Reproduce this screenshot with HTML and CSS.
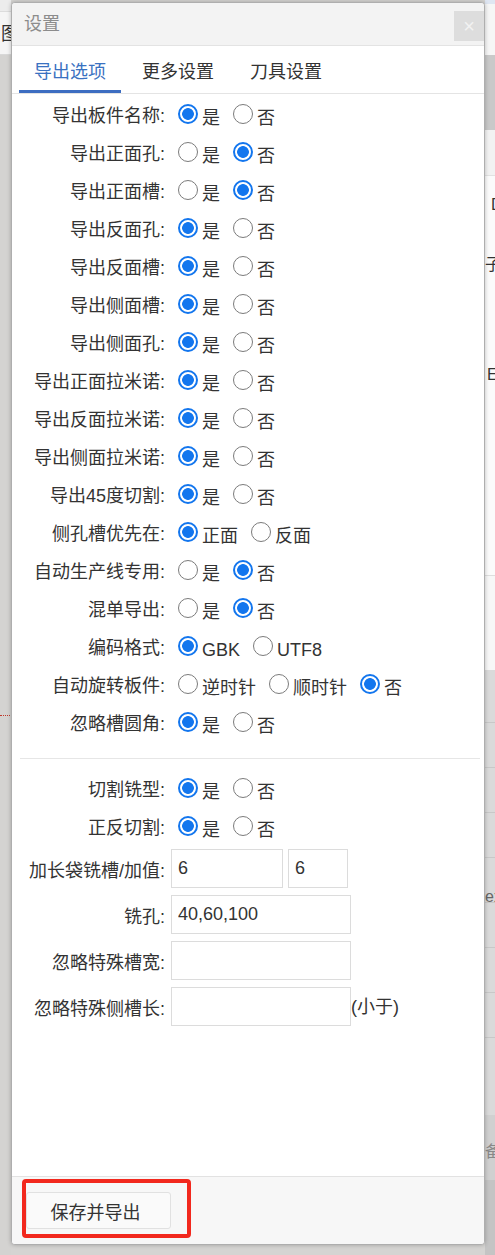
FILE: index.html
```html
<!DOCTYPE html>
<html lang="zh">
<head>
<meta charset="utf-8">
<title>设置</title>
<link rel="stylesheet" href="styles.css">
</head>
<body>
<div class="bg">
  <div class="bg-left">
    <div class="bl-top"></div>
    <div class="bl-bar"><span>图</span></div>
    <div class="bl-gray"><div class="dots"></div></div>
  </div>
  <div class="bg-mid"></div>
  <div class="bg-right">
    <div class="br b1"></div>
    <div class="br b2"></div>
    <div class="br b3"></div>
    <div class="br b4"></div>
    <div class="br b5"><span class="frag d">D</span><span class="frag z">子</span><span class="frag e">E</span></div>
    <div class="br b6"></div>
    <div class="br b7"><div class="ln"></div><div class="ln"></div><div class="ln"></div><div class="ln"></div><div class="ln"></div><div class="ln"></div><div class="ln"></div><div class="ln"></div><span class="frag x">ex</span></div>
    <div class="br b8"><span class="frag b">备</span></div>
    <div class="br b9"></div>
  </div>
</div>

<div class="dialog">
  <div class="dlg-head">
    <span class="dlg-title">设置</span>
    <span class="dlg-close">×</span>
  </div>
  <div class="tabs">
    <div class="tab active">导出选项</div>
    <div class="tab">更多设置</div>
    <div class="tab">刀具设置</div>
  </div>
  <div class="dlg-body">
    <div class="row"><span class="lbl">导出板件名称:</span>
      <label class="opt"><input type="radio" name="r1" checked><span>是</span></label>
      <label class="opt"><input type="radio" name="r1"><span>否</span></label></div>
    <div class="row"><span class="lbl">导出正面孔:</span>
      <label class="opt"><input type="radio" name="r2"><span>是</span></label>
      <label class="opt"><input type="radio" name="r2" checked><span>否</span></label></div>
    <div class="row"><span class="lbl">导出正面槽:</span>
      <label class="opt"><input type="radio" name="r3"><span>是</span></label>
      <label class="opt"><input type="radio" name="r3" checked><span>否</span></label></div>
    <div class="row"><span class="lbl">导出反面孔:</span>
      <label class="opt"><input type="radio" name="r4" checked><span>是</span></label>
      <label class="opt"><input type="radio" name="r4"><span>否</span></label></div>
    <div class="row"><span class="lbl">导出反面槽:</span>
      <label class="opt"><input type="radio" name="r5" checked><span>是</span></label>
      <label class="opt"><input type="radio" name="r5"><span>否</span></label></div>
    <div class="row"><span class="lbl">导出侧面槽:</span>
      <label class="opt"><input type="radio" name="r6" checked><span>是</span></label>
      <label class="opt"><input type="radio" name="r6"><span>否</span></label></div>
    <div class="row"><span class="lbl">导出侧面孔:</span>
      <label class="opt"><input type="radio" name="r7" checked><span>是</span></label>
      <label class="opt"><input type="radio" name="r7"><span>否</span></label></div>
    <div class="row"><span class="lbl">导出正面拉米诺:</span>
      <label class="opt"><input type="radio" name="r8" checked><span>是</span></label>
      <label class="opt"><input type="radio" name="r8"><span>否</span></label></div>
    <div class="row"><span class="lbl">导出反面拉米诺:</span>
      <label class="opt"><input type="radio" name="r9" checked><span>是</span></label>
      <label class="opt"><input type="radio" name="r9"><span>否</span></label></div>
    <div class="row"><span class="lbl">导出侧面拉米诺:</span>
      <label class="opt"><input type="radio" name="r10" checked><span>是</span></label>
      <label class="opt"><input type="radio" name="r10"><span>否</span></label></div>
    <div class="row"><span class="lbl">导出45度切割:</span>
      <label class="opt"><input type="radio" name="r11" checked><span>是</span></label>
      <label class="opt"><input type="radio" name="r11"><span>否</span></label></div>
    <div class="row"><span class="lbl">侧孔槽优先在:</span>
      <label class="opt"><input type="radio" name="r12" checked><span>正面</span></label>
      <label class="opt"><input type="radio" name="r12"><span>反面</span></label></div>
    <div class="row"><span class="lbl">自动生产线专用:</span>
      <label class="opt"><input type="radio" name="r13"><span>是</span></label>
      <label class="opt"><input type="radio" name="r13" checked><span>否</span></label></div>
    <div class="row"><span class="lbl">混单导出:</span>
      <label class="opt"><input type="radio" name="r14"><span>是</span></label>
      <label class="opt"><input type="radio" name="r14" checked><span>否</span></label></div>
    <div class="row"><span class="lbl">编码格式:</span>
      <label class="opt"><input type="radio" name="r15" checked><span>GBK</span></label>
      <label class="opt"><input type="radio" name="r15"><span>UTF8</span></label></div>
    <div class="row"><span class="lbl">自动旋转板件:</span>
      <label class="opt"><input type="radio" name="r16"><span>逆时针</span></label>
      <label class="opt"><input type="radio" name="r16"><span>顺时针</span></label>
      <label class="opt"><input type="radio" name="r16" checked><span>否</span></label></div>
    <div class="row"><span class="lbl">忽略槽圆角:</span>
      <label class="opt"><input type="radio" name="r17" checked><span>是</span></label>
      <label class="opt"><input type="radio" name="r17"><span>否</span></label></div>

    <div class="divider"></div>

    <div class="row"><span class="lbl">切割铣型:</span>
      <label class="opt"><input type="radio" name="r18" checked><span>是</span></label>
      <label class="opt"><input type="radio" name="r18"><span>否</span></label></div>
    <div class="row"><span class="lbl">正反切割:</span>
      <label class="opt"><input type="radio" name="r19" checked><span>是</span></label>
      <label class="opt"><input type="radio" name="r19"><span>否</span></label></div>

    <div class="inputs">
      <div class="row in"><span class="lbl">加长袋铣槽/加值:</span>
        <input class="txt w1" type="text" value="6"><input class="txt w2" type="text" value="6"></div>
      <div class="row in"><span class="lbl">铣孔:</span>
        <input class="txt w3" type="text" value="40,60,100"></div>
      <div class="row in"><span class="lbl">忽略特殊槽宽:</span>
        <input class="txt w3" type="text" value=""></div>
      <div class="row in"><span class="lbl">忽略特殊侧槽长:</span>
        <input class="txt w3" type="text" value=""><span class="suffix">(小于)</span></div>
    </div>
  </div>
  <div class="dlg-foot">
    <div class="highlight">
      <button class="btn" type="button">保存并导出</button>
    </div>
  </div>
</div>
</body>
</html>
```

FILE: styles.css
```css
* { box-sizing: border-box; }
html, body {
  margin: 0;
  padding: 0;
}
body {
  width: 495px;
  height: 1255px;
  overflow: hidden;
  position: relative;
  font-family: "Liberation Sans", "Noto Sans CJK SC", sans-serif;
  font-size: 18px;
  color: #333;
  background: #d5d4d2;
}

/* background page */
.bg {
  display: flex;
  height: 1255px;
}
.bg-left {
  width: 11px;
  flex: none;
  display: flex;
  flex-direction: column;
  overflow: hidden;
}
.bl-top {
  height: 12px;
  background: #ececec;
  border-bottom: 1px solid #dcdcdc;
}
.bl-bar {
  height: 43px;
  background: #f5f5f5;
  border-bottom: 1px solid #d8d8d8;
  padding-top: 11px;
  padding-left: 1px;
  color: #333;
  line-height: 22px;
  white-space: nowrap;
}
.bl-gray {
  flex: 1;
  background: #d4d3d1;
  padding-top: 660px;
}
.dots {
  width: 10px;
  border-top: 1px dotted #c0392b;
}
.bg-mid { flex: 1; background: #d5d4d2; }
.bg-right {
  width: 10px;
  flex: none;
  display: flex;
  flex-direction: column;
  overflow: hidden;
  color: #333;
  font-size: 16px;
  line-height: 18px;
}
.br { flex: none; display: flex; flex-direction: column; }
.b1 { height: 4px; background: #dfe6f2; }
.b2 { height: 51px; background: #f6f6f6; }
.b3 { height: 75px; background: #c9c9c9; }
.b4 { height: 45px; background: #f2f2f2; }
.b5 { height: 400px; background: #fbfbfb; border-top: 1px solid #e2e2e2; padding-top: 20px; }
.b5 .frag { margin-left: 6px; }
.b5 .z { margin-top: 42px; margin-left: 0; }
.b5 .e { margin-top: 92px; margin-left: 2px; }
.b6 { height: 95px; background: #f7f7f7; border-top: 1px solid #dedede; }
.b7 { height: 445px; background: #dadada; padding-top: 8px; }
.b7 .ln { height: 45px; border-bottom: 1px solid #c8c8c8; flex: none; }
.b7 .x { margin-top: -150px; color: #666; }
.b8 { height: 65px; background: #d0d0d0; padding-top: 28px; color: #888; }
.b9 { flex: 1; background: #c4c4c4; }

/* dialog */
.dialog {
  position: absolute;
  left: 11px;
  top: 2px;
  width: 474px;
  height: 1243px;
  background: #fff;
  border: 1px solid #aeaeae;
  border-radius: 4px;
  box-shadow: 0 0 4px rgba(0, 0, 0, 0.25);
  display: flex;
  flex-direction: column;
  overflow: hidden;
}
.dlg-head {
  height: 43px;
  flex: none;
  background: #f3f3f3;
  border-bottom: 1px solid #e3e3e3;
  display: flex;
  align-items: flex-start;
  justify-content: space-between;
  padding-left: 12px;
}
.dlg-title {
  color: #8c8c8c;
  font-size: 18px;
  line-height: 22px;
  margin-top: 10px;
}
.dlg-close {
  width: 30px;
  height: 30px;
  margin-top: 8px;
  background: #dddddd;
  color: #f2f2f2;
  font-size: 20px;
  line-height: 30px;
  text-align: center;
}
.tabs {
  height: 48px;
  flex: none;
  display: flex;
  gap: 6px;
  padding-left: 7px;
  border-bottom: 1px solid #e4e4e4;
}
.tab {
  height: 47px;
  padding: 4px 15px 0;
  border-bottom: 3px solid transparent;
  display: flex;
  align-items: center;
  color: #333;
  font-size: 18px;
}
.tab.active {
  color: #3a71c1;
  border-bottom-color: #3d6dc1;
}

.dlg-body {
  flex: 1;
  padding-top: 1px;
}
.row {
  display: flex;
  align-items: center;
  height: 38px;
}
.lbl {
  width: 153px;
  flex: none;
  text-align: right;
  white-space: nowrap;
  margin-right: 6px;
}
.opt {
  display: flex;
  align-items: center;
  margin-left: 13px;
  white-space: nowrap;
}
.lbl + .opt { margin-left: 7px; }
.opt span {
  padding-top: 8px;
  line-height: 22px;
}
.opt input {
  -webkit-appearance: none;
  appearance: none;
  width: 20px;
  height: 20px;
  margin: 0 4px 0 0;
  border: 1.5px solid #7b7b7b;
  border-radius: 50%;
  background: #fff;
  flex: none;
}
.opt input:checked {
  border: 2px solid #1376ee;
  background: radial-gradient(circle, #1376ee 0, #1376ee 5.5px, #fff 6.2px);
}
.divider {
  height: 1px;
  background: #e6e6e6;
  margin: 17px 4px 10px 8px;
}
.inputs { padding-top: 4px; }
.row.in {
  height: 39px;
  margin-bottom: 7px;
}
.txt {
  height: 39px;
  border: 1px solid #dcdcdc;
  padding: 0 6px;
  font-family: "Liberation Sans", "Noto Sans CJK SC", sans-serif;
  font-size: 18px;
  color: #333;
  background: #fff;
  outline: none;
  border-radius: 0;
}
.w1 { width: 112px; }
.w2 { width: 60px; margin-left: 5px; }
.w3 { width: 180px; }
.suffix { line-height: 22px; }

.dlg-foot {
  height: 68px;
  flex: none;
  background: #f7f7f7;
  border-top: 1px solid #e2e2e2;
  padding: 2px 0 0 10px;
}
.highlight {
  width: 169px;
  height: 59px;
  border: 4px solid #f2281d;
  border-radius: 4px;
  padding: 9px 0 0 0;
}
.btn {
  width: 145px;
  height: 37px;
  background: #fafafa;
  border: 1px solid #e1e1e1;
  border-radius: 3px;
  font-family: "Liberation Sans", "Noto Sans CJK SC", sans-serif;
  font-size: 18px;
  color: #333;
  padding: 0 6px 0 0;
  display: block;
}
```
